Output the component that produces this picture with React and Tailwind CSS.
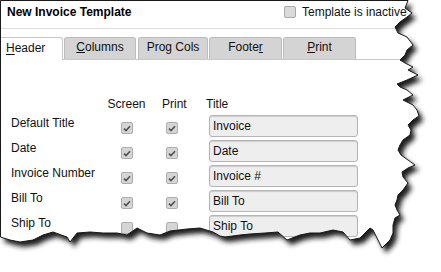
import React from "react";

const EDGE =
  "M0.5,0.5 L408,0.5 L405,8 L412,13 L407,17 L400,22 L395,27 L398,33 L407,37 L413,45 L407,50 L405,55 L400,60 L405,63 L413,67 L408,70 L418,75 L407,80 L397,84 L400,87 L407,90 L413,95 L403,100 L413,105 L417,110 L419,116 L413,120 L408,125 L411,130 L410,135 L403,140 L400,145 L398,150 L401,155 L408,160 L415,165 L408,168 L402,172 L403,177 L408,183 L403,190 L398,195 L397,200 L395,205 L397,210 L400,215 L395,218 L393,225 L393,233 L390,240 L382,248 L373,230 L370,228 L360,238 L350,240 L343,232 L333,230 L320,233 L310,233 L300,235 L287,240 L278,232 L265,233 L250,234 L240,235 L225,237 L220,236 L213,232 L200,228 L187,229 L170,231 L160,235 L147,233 L137,228 L127,235 L117,233 L103,233 L90,232 L77,233 L70,242 L67,237 L53,232 L43,235 L33,240 L20,242 L10,240 L0.5,237 Z";

function Check({ checked }) {
  return (
    <div className="w-[12px] h-[12px] rounded-[2px] border border-[#adadad] bg-[#d5d5d5] flex items-center justify-center">
      {checked && (
        <svg width="8" height="7" viewBox="0 0 8 7">
          <path d="M1 3.6 L3 5.6 L7 1.2" fill="none" stroke="#505050" strokeWidth="1.6" />
        </svg>
      )}
    </div>
  );
}

const rows = [
  { label: "Default Title", screen: true, print: true, title: "Invoice" },
  { label: "Date", screen: true, print: true, title: "Date" },
  { label: "Invoice Number", screen: true, print: true, title: "Invoice #" },
  { label: "Bill To", screen: true, print: true, title: "Bill To" },
  { label: "Ship To", screen: false, print: false, title: "Ship To" },
];

export default function App() {
  return (
    <div className="relative w-[441px] h-[272px] bg-white overflow-hidden font-['Liberation_Sans',Arial,sans-serif] text-[#111] text-[12px] leading-[14px]">
      <div className="w-[425px] h-[250px] border-l border-t border-[#333]">
        {/* title bar */}
        <div className="h-[28px] border-b border-[#dcdcdc] flex items-start justify-between pt-[4px] pl-[6px]">
          <div className="font-bold text-[12px] leading-[14px] text-black">New Invoice Template</div>
          <div className="flex items-start w-[141px] pt-[1px]">
            <div className="w-[12px] h-[12px] rounded-[2px] border border-[#a9a9a9] bg-[#dadada]" />
            <span className="ml-[6px] -mt-[1px] whitespace-nowrap">Template is inactive</span>
          </div>
        </div>

        {/* tabs */}
        <div className="mt-[8px] h-[23px] flex items-end border-b border-[#c8c8c8]">
          <div className="relative z-10 -mb-px h-[23px] w-[62px] bg-white border-t border-r border-[#c8c8c8] rounded-tr-[3px] pl-[5px] pt-[3px]">
            <u className="underline-offset-2">H</u>eader
          </div>
          <div className="ml-[1px] h-[22px] w-[72px] bg-[#d4d4d4] border-t border-l border-r border-[#bdbdbd] rounded-t-[3px] text-center pt-[2px]">
            <u>C</u>olumns
          </div>
          <div className="ml-[2px] h-[22px] w-[70px] bg-[#d4d4d4] border-t border-l border-r border-[#bdbdbd] rounded-t-[3px] text-center pt-[2px]">
            Pro<u>g</u> Cols
          </div>
          <div className="ml-[1px] h-[22px] w-[73px] bg-[#d4d4d4] border-t border-l border-r border-[#bdbdbd] rounded-t-[3px] text-center pt-[2px]">
            Foote<u>r</u>
          </div>
          <div className="ml-[1px] h-[22px] w-[73px] bg-[#d4d4d4] border-t border-l border-r border-[#bdbdbd] rounded-t-[3px] text-center pt-[2px]">
            <u>P</u>rint
          </div>
        </div>

        {/* body */}
        <div className="pt-[37px] pl-[10px]">
          <div className="flex h-[18px] items-start">
            <div className="w-[96px]" />
            <div className="w-[39px] text-center">Screen</div>
            <div className="w-[60px] pl-[16px]">Print</div>
            <div>Title</div>
          </div>
          {rows.map((r) => (
            <div key={r.label} className="flex h-[25px] items-start">
              <div className="w-[96px] pt-[1px] whitespace-nowrap">{r.label}</div>
              <div className="w-[39px] flex justify-center pt-[7px]">
                <Check checked={r.screen} />
              </div>
              <div className="w-[60px] pl-[20px] pt-[7px]">
                <Check checked={r.print} />
              </div>
              <div className="ml-[3px] w-[149px] h-[22px] rounded-[3px] border border-[#b5b5b5] bg-[#eeeeee] shadow-[inset_0_1px_1px_rgba(0,0,0,0.14)] pl-[3px] pt-[3px] whitespace-nowrap">
                {r.title}
              </div>
            </div>
          ))}
        </div>
      </div>

      {/* torn paper edge drawing */}
      <svg className="absolute inset-0 pointer-events-none" width="441" height="272" viewBox="0 0 441 272">
        <defs>
          <mask id="outside">
            <rect x="0" y="0" width="441" height="272" fill="white" />
            <path d={EDGE} fill="black" />
          </mask>
          <filter id="blur" x="-20%" y="-20%" width="140%" height="140%">
            <feGaussianBlur stdDeviation="2.6" />
          </filter>
        </defs>
        <g mask="url(#outside)">
          <rect x="0" y="0" width="441" height="272" fill="white" />
          <path d={EDGE} fill="#1e1e1e" transform="translate(4,5)" filter="url(#blur)" />
        </g>
        <path d={EDGE} fill="none" stroke="#1a1a1a" strokeWidth="1" />
      </svg>
    </div>
  );
}
